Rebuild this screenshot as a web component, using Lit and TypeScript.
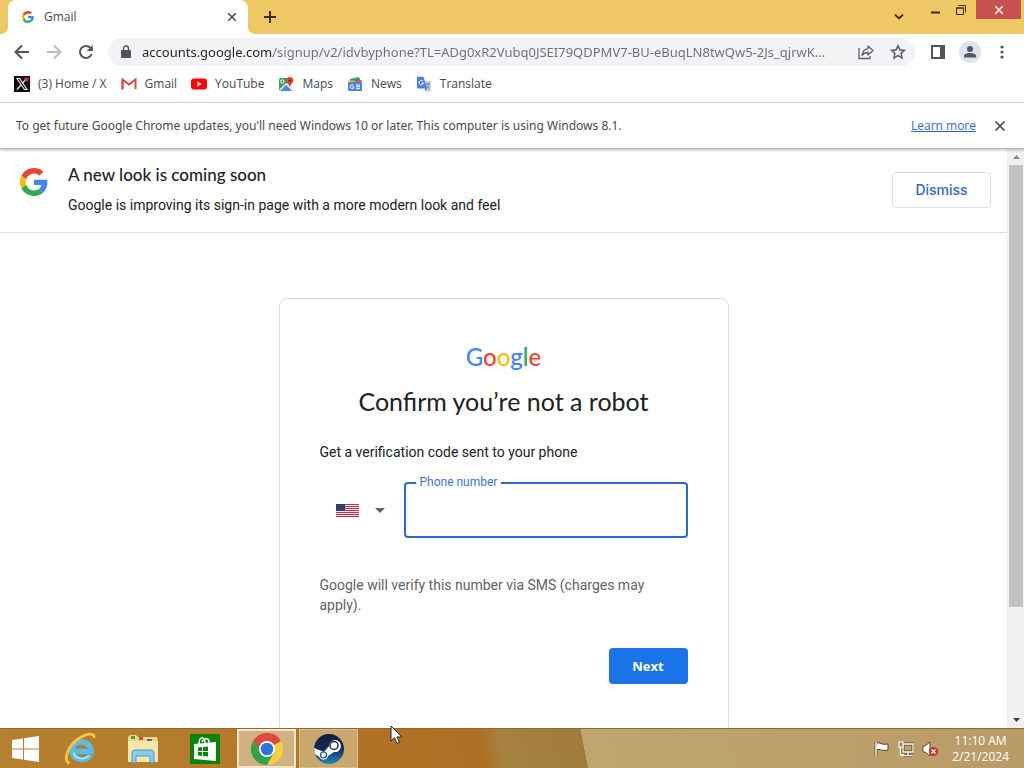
import { LitElement, html, svg, css } from "lit";
import { customElement } from "lit/decorators.js";

const googleG = html`<svg viewBox="0 0 48 48" aria-hidden="true">
  <path fill="#EA4335" d="M24 9.5c3.54 0 6.71 1.22 9.21 3.6l6.85-6.85C35.9 2.38 30.47 0 24 0 14.62 0 6.51 5.38 2.56 13.22l7.98 6.19C12.43 13.72 17.74 9.5 24 9.5z"/>
  <path fill="#4285F4" d="M46.98 24.55c0-1.57-.15-3.09-.38-4.55H24v9.02h12.94c-.58 2.96-2.26 5.48-4.78 7.18l7.73 6c4.51-4.18 7.09-10.36 7.09-17.65z"/>
  <path fill="#FBBC05" d="M10.53 28.59c-.48-1.45-.76-2.99-.76-4.59s.27-3.14.76-4.59l-7.98-6.19C.92 16.46 0 20.12 0 24c0 3.88.92 7.54 2.56 10.78l7.97-6.19z"/>
  <path fill="#34A853" d="M24 48c6.48 0 11.93-2.13 15.89-5.81l-7.73-6c-2.15 1.45-4.92 2.3-8.16 2.3-6.26 0-11.57-4.22-13.47-9.91l-7.98 6.19C6.51 42.62 14.62 48 24 48z"/>
</svg>`;

const cross = html`<svg viewBox="0 0 12 12" aria-hidden="true"><path d="M1.5 1.5l9 9M10.5 1.5l-9 9" stroke="currentColor" stroke-width="1.7" fill="none"/></svg>`;

const bookmarks = [
  { name: "(3) Home / X", icon: svg`<rect width="16" height="16" fill="#0b0b0b"/><path d="M3 2.500h2.600l7.400 11h-2.600z" fill="none" stroke="#eee" stroke-width="1.100"/><path d="M12.500 2.500l-4.300 5M7 8.800l-4 4.700" stroke="#eee" stroke-width="1.200"/><circle cx="12.500" cy="3.500" r="2.200" fill="#e0245e"/>` },
  { name: "Gmail", icon: svg`<path d="M1.500 13V3.500L8 8.500l6.500-5V13" fill="none" stroke="#e0463e" stroke-width="2"/><path d="M1.500 13.500V5" stroke="#cf4d63" stroke-width="2"/>` },
  { name: "YouTube", icon: svg`<rect y="2.500" width="16" height="11" rx="3" fill="#f00"/><path d="M6.400 5.500v5l4.300-2.500z" fill="#fff"/>` },
  { name: "Maps", icon: svg`<rect x="1" y="2" width="13" height="13" rx="1.500" fill="#34a05a"/><path d="M8 8l6-3v10H9z" fill="#e8e8e8"/><path d="M2 15l6-6 6 6z" fill="#4a86ee"/><path d="M1.500 14.500l7-7" stroke="#f3efe0" stroke-width="1.500"/><path d="M11.800 1a3.600 3.600 0 0 0-3.600 3.600c0 2.600 3 3.500 3.600 7 .6-3.500 3.600-4.400 3.600-7A3.600 3.600 0 0 0 11.800 1z" fill="#df4639"/><circle cx="11.800" cy="4.600" r="1.200" fill="#7d211b"/><circle cx="4.300" cy="5.500" r="1.700" fill="none" stroke="#fff"/>` },
  { name: "News", icon: svg`<path d="M3 3l9-2 2 5H3z" fill="#2f9e57"/><path d="M1.500 4.500h6V8h-6z" fill="#e8b73a"/><path d="M9 4h5.500v4H9z" fill="#d9534a"/><rect x="1" y="6" width="14" height="9" rx="1" fill="#4d83e8"/><path d="M6.500 9.500A1.900 1.900 0 1 0 7 11H5.300M9 9h4M9 10.800h4M9 12.600h4" stroke="#fff" fill="none"/>` },
  { name: "Translate", icon: svg`<path d="M6.500 5H14a1 1 0 0 1 1 1v8.500a1 1 0 0 1-1 1H9.500z" fill="#c9ced6"/><path d="M9.500 8h4.500M11.700 7v1M13 8c-.4 2-1.600 3.500-3 4.500M10.600 9.500c.5 1.200 1.500 2.200 2.700 3" stroke="#6d83a8" fill="none"/><path d="M1 .800h6.500L11 12.500H2a1 1 0 0 1-1-1z" fill="#4a80e6"/><path d="M9 12.500h2L9.500 15z" fill="#2c56b4"/><path d="M7 5.200A2.200 2.200 0 1 0 7.500 7H5.400" stroke="#fff" fill="none"/>` },
];

@customElement("app-root")
export class AppRoot extends LitElement {
  static styles = css`
    :host { display: flex; flex-direction: column; height: 100vh; overflow: hidden; background: #fff; color: #202124; font: 14px/20px Roboto, sans-serif; }
    * { box-sizing: border-box; }
    button, input, select { font: inherit; color: inherit; margin: 0; border: 0; background: none; padding: 0; }
    button { display: flex; align-items: center; justify-content: center; flex: none; }
    svg { display: block; flex: none; }
    h1, h2, p { margin: 0; font-weight: 400; }
    .ui { font-family: "Open Sans", sans-serif; font-size: 12px; line-height: 16px; }

    .strip { display: flex; flex: none; height: 34px; padding-left: 8px; background: #efc865; color: #3d2b12; }
    .tab { position: relative; display: flex; align-items: center; width: 240px; padding: 0 10px 0 14px; background: #fff; border-radius: 8px 8px 0 0; color: #45494d; }
    .tab::before, .tab::after { content: ""; position: absolute; bottom: 0; width: 8px; height: 8px; }
    .tab::before { left: -8px; background: radial-gradient(circle at 0 0, transparent 8px, #fff 8px); }
    .tab::after { right: -8px; background: radial-gradient(circle at 100% 0, transparent 8px, #fff 8px); }
    .tab-icon svg { width: 12px; height: 12px; }
    .tab-title { flex: 1; padding-left: 10px; }
    .tab button, .tab button svg { width: 12px; height: 10px; }
    .plus { width: 28px; margin-left: 8px; }
    .space { flex: 1; }
    .search-tabs { width: 30px; margin-right: 8px; }
    .win { width: 26px; height: 20px; }
    .win-close { width: 45px; height: 19px; margin: 0 3px 0 2px; background: #c75050; color: #fff; }
    .win-close svg { width: 10px; height: 10px; }

    .toolbar { display: flex; align-items: center; flex: none; height: 36px; padding: 0 12px; color: #5f6368; }
    .nav { display: flex; gap: 12px; padding-right: 12px; }
    .nav button { width: 20px; height: 20px; }
    .omnibox { display: flex; align-items: center; flex: 1; min-width: 0; height: 28px; padding: 0 8px 0 12px; border-radius: 14px; background: #f1f3f4; }
    .url { flex: 1; min-width: 0; height: 24px; margin: 0 12px 0 10px; font-family: "Noto Sans", sans-serif; font-size: 13px; color: transparent; background: linear-gradient(90deg, #202124 131px, #6b6f74 131px); -webkit-background-clip: text; background-clip: text; text-overflow: ellipsis; outline: 0; }
    .box-actions { display: flex; gap: 14px; }
    .box-actions button { width: 18px; height: 18px; }
    .tools { display: flex; align-items: center; gap: 12px; padding-left: 13px; }
    .tools button { width: 20px; height: 22px; }

    .bookmarks { display: flex; align-items: center; gap: 14px; flex: none; height: 33px; padding: 0 14px 4px; border-bottom: 1px solid #d4d5d8; }
    .bookmarks a { display: flex; align-items: center; gap: 8px; color: #45494d; text-decoration: none; }

    .infobar { display: flex; align-items: center; flex: none; height: 46px; padding: 0 18px 0 16px; border-bottom: 1px solid #b4b4b4; box-shadow: 0 1px 3px #0004; color: #45494d; z-index: 1; }
    .infobar p { flex: 1; font-family: "Noto Sans", sans-serif; }
    .infobar a { color: #3267c8; margin-right: 18px; }
    .infobar button, .infobar button svg { width: 12px; height: 12px; }

    .view { display: flex; flex: 1; min-height: 0; }
    .page { flex: 1; min-width: 0; overflow: hidden; }
    .banner { display: flex; padding: 16px 16px 16px 20px; border-bottom: 1px solid #dadce0; }
    .banner-logo svg { width: 28px; height: 28px; margin-top: 3px; }
    .banner-text { flex: 1; padding-left: 20px; }
    .banner h2 { font: 500 17px/20px Lato, sans-serif; }
    .banner p { padding: 10px 0 1px; }
    .dismiss { width: 99px; height: 36px; margin-top: 7px; border: 1px solid #dadce0; border-radius: 4px; color: #3468c9; font: 500 14px/20px Inter, sans-serif; }

    .card { width: 450px; max-width: 100%; min-height: 500px; margin: 65px auto 0; padding: 42px 40px 36px; border: 1px solid #dadce0; border-radius: 8px; }
    .wordmark { height: 32px; text-align: center; font: 500 24px/32px Lato, sans-serif; }
    .b { color: #4285f4; } .r { color: #ea4335; } .y { color: #fbbc05; } .g { color: #34a853; }
    .card h1 { padding-top: 12px; text-align: center; font: 400 25px/32px Lato, sans-serif; }
    .lead { padding-top: 25px; }
    .phone { display: flex; padding-top: 20px; }
    .country { display: grid; align-items: center; width: 84px; height: 56px; }
    .country > * { grid-area: 1 / 1; }
    .country-face { display: flex; align-items: center; gap: 16px; padding-left: 16px; }
    .country select { width: 100%; height: 100%; appearance: none; color: transparent; }
    .country option { color: #202124; }
    .field { position: relative; flex: 1; }
    .field input { width: 100%; height: 56px; padding: 0 14px; border: 2px solid #2a6ac8; border-radius: 4px; outline: 0; font-size: 16px; }
    .field label { position: absolute; left: 12px; top: -8px; padding: 0 4px; background: #fff; color: #3f73cd; font-size: 12px; line-height: 16px; }
    .note { padding-top: 37px; color: #5f6368; }
    .actions { display: flex; justify-content: flex-end; padding-top: 33px; }
    .next { width: 79px; height: 36px; border-radius: 4px; background: #1a73e8; color: #fff; font: 700 13px/20px "Open Sans", sans-serif; }

    .scroll { display: flex; flex-direction: column; flex: none; width: 17px; padding: 0 1px 0 2px; background: #f1f1f1; }
    .scroll button { height: 16px; }
    .thumb { flex: 442; background: #c1c1c1; }
    .track { flex: 105; }

    .taskbar { display: flex; flex: none; height: 40px; border-top: 1px solid #8d6a35; background: linear-gradient(79deg, #b5802f 0, #b37a2b 24%, #b27327 34%, #ae6e23 47%, #a6823f 49%, #a07c3c 57%, #bfa670 57%, #b99b68 100%); color: #fff; }
    .apps { display: flex; flex: 1; }
    .apps button { width: 62px; }
    .apps button:first-child { width: 50px; }
    .apps .open { width: 59px; margin-left: 1px; margin-right: 2px; border: 1px solid #d9bd8b; background: #c9a76d; }
    .apps .active { border: 2px solid #f5e5c8; background: #d0b282; }
    .tray { display: flex; align-items: center; gap: 8px; padding-right: 14px; }
    .clock { padding: 4px 15px 0 0; text-align: center; }
    .cursor { position: absolute; left: 390px; top: 725px; z-index: 2; pointer-events: none; }
  `;

  render() {
    return html`
      <header class="strip ui">
        <div class="tab">
          <span class="tab-icon">${googleG}</span><span class="tab-title">Gmail</span>
          <button aria-label="Close tab">${cross}</button>
        </div>
        <button class="plus" aria-label="New tab"><svg width="12" height="12" viewBox="0 0 12 12"><path d="M6 0v12M0 6h12" stroke="currentColor" stroke-width="2"/></svg></button>
        <span class="space"></span>
        <button class="search-tabs" aria-label="Search tabs"><svg width="10" height="6" viewBox="0 0 10 6"><path d="M1 0.500l4 4 4-4" fill="none" stroke="currentColor" stroke-width="1.800"/></svg></button>
        <button class="win" aria-label="Minimize"><svg width="9" height="10" viewBox="0 0 9 10"><path d="M0 7.500h9" stroke="currentColor" stroke-width="2"/></svg></button>
        <button class="win" aria-label="Restore"><svg width="10" height="10" viewBox="0 0 10 10"><path d="M.500 3v6.500h7V3z M0 3h8M2.500 .500h7v7" fill="none" stroke="currentColor"/></svg></button>
        <button class="win-close" aria-label="Close">${cross}</button>
      </header>

      <nav class="toolbar">
        <div class="nav">
          <button aria-label="Back"><svg width="16" height="16" viewBox="0 0 16 16"><path d="M15 8H2M8 1.500L1.500 8 8 14.500" fill="none" stroke="#505458" stroke-width="2"/></svg></button>
          <button aria-label="Forward"><svg width="16" height="16" viewBox="0 0 16 16"><path d="M1 8h13M8 1.500L14.500 8 8 14.500" fill="none" stroke="#b9bbbe" stroke-width="2"/></svg></button>
          <button aria-label="Reload"><svg width="16" height="16" viewBox="0 0 16 16"><path d="M13.600 10A6 6 0 1 1 12.500 4L14 5.500" fill="none" stroke="#505458" stroke-width="2"/><path d="M14.800 1v6H8.800z" fill="#505458"/></svg></button>
        </div>
        <div class="omnibox">
          <svg width="12" height="14" viewBox="0 0 12 14"><rect x="1" y="5" width="10" height="8" rx="1" fill="#505458"/><path d="M3.500 5.500V3.500a2.500 2.500 0 0 1 5 0v2" fill="none" stroke="#505458" stroke-width="1.400"/></svg>
          <input class="url" aria-label="Address and search bar" .value=${"accounts.google.com/signup/v2/idvbyphone?TL=ADg0xR2Vubq0JSEI79QDPMV7-BU-eBuqLN8twQw5-2Js_qjrwK..."}>
          <div class="box-actions">
            <button aria-label="Share"><svg width="16" height="16" viewBox="0 0 16 16"><path d="M1 4v10.500h11V12" fill="none" stroke="currentColor" stroke-width="1.300"/><path d="M10 2l5 4.500-5 4.500V8.500C7 8.500 5.300 9.500 4 11.500 4.500 7.500 6.500 5 10 4.700z" fill="none" stroke="currentColor" stroke-width="1.300" stroke-linejoin="round"/></svg></button>
            <button aria-label="Bookmark this tab"><svg width="16" height="16" viewBox="0 0 16 16"><path d="M8 1.800l1.900 4.100 4.500.5-3.300 3 .9 4.500L8 11.600l-4 2.300.9-4.500-3.300-3 4.500-.5z" fill="none" stroke="currentColor" stroke-width="1.600"/></svg></button>
          </div>
        </div>
        <div class="tools">
          <button aria-label="Side panel"><svg width="14" height="14" viewBox="0 0 14 14"><path d="M1 1h12v12H1z" fill="none" stroke="#505458" stroke-width="2"/><path d="M9 1h4v12H9z" fill="#505458"/></svg></button>
          <button aria-label="Profile"><svg width="22" height="22" viewBox="0 0 22 22"><circle cx="11" cy="11" r="11" fill="#dfe2e8"/><circle cx="11" cy="8" r="3" fill="#4d5566"/><path d="M5 16.500v-1.500c0-2.200 4-3 6-3s6 .8 6 3v1.500z" fill="#4d5566"/></svg></button>
          <button aria-label="Menu"><svg width="4" height="14" viewBox="0 0 4 14"><g fill="#505458"><circle cx="2" cy="2" r="1.600"/><circle cx="2" cy="7" r="1.600"/><circle cx="2" cy="12" r="1.600"/></g></svg></button>
        </div>
      </nav>

      <nav class="bookmarks ui">
        ${bookmarks.map(b => html`<a href="#"><svg width="16" height="16" viewBox="0 0 16 16">${b.icon}</svg>${b.name}</a>`)}
      </nav>

      <div class="infobar ui">
        <p>To get future Google Chrome updates, you'll need Windows 10 or later. This computer is using Windows 8.1.</p>
        <a href="#">Learn more</a>
        <button aria-label="Close message">${cross}</button>
      </div>

      <div class="view">
        <main class="page">
          <section class="banner">
            <span class="banner-logo">${googleG}</span>
            <div class="banner-text"><h2>A new look is coming soon</h2><p>Google is improving its sign-in page with a more modern look and feel</p></div>
            <button class="dismiss">Dismiss</button>
          </section>
          <section class="card">
            <div class="wordmark"><span class="b">G</span><span class="r">o</span><span class="y">o</span><span class="b">g</span><span class="g">l</span><span class="r">e</span></div>
            <h1>Confirm you’re not a robot</h1>
            <p class="lead">Get a verification code sent to your phone</p>
            <div class="phone">
              <div class="country">
                <span class="country-face">
                  <svg width="23" height="13" viewBox="0 0 23 13"><rect width="23" height="13" fill="#f6e3e6"/><path d="M0 .500h23M0 2.500h23M0 4.500h23M0 6.500h23M0 8.500h23M0 10.500h23M0 12.500h23" stroke="#c4314b"/><rect width="9" height="7" fill="#2f3f70"/></svg>
                  <svg width="10" height="5" viewBox="0 0 10 5"><path d="M0 0h10L5 5z" fill="#5f6368"/></svg>
                </span>
                <select aria-label="Country"><option>United States</option></select>
              </div>
              <div class="field"><input id="phone" type="tel"><label for="phone">Phone number</label></div>
            </div>
            <p class="note">Google will verify this number via SMS (charges may apply).</p>
            <div class="actions"><button class="next">Next</button></div>
          </section>
        </main>
        <div class="scroll">
          <button aria-label="Scroll up"><svg width="7" height="4" viewBox="0 0 7 4"><path d="M0 4l3.500-4L7 4z" fill="#8a8a8a"/></svg></button>
          <div class="thumb"></div><div class="track"></div>
          <button aria-label="Scroll down"><svg width="7" height="4" viewBox="0 0 7 4"><path d="M0 0h7L3.500 4z" fill="#404040"/></svg></button>
        </div>
      </div>

      <footer class="taskbar ui">
        <div class="apps">
          <button aria-label="Start"><svg width="27" height="26" viewBox="0 0 27 26"><path d="M0 4l11-1.500v10H0zM12 2.300L27 0v12.500H12zM0 13.500h11v10L0 22zM12 13.500h15V26l-15-2.300z" fill="#fff"/></svg></button>
          <button aria-label="Internet Explorer"><svg width="32" height="32" viewBox="0 0 32 32"><path d="M25.500 22C22 29 7 28 7 17.500 7 6 26 6 26 18.500H10" fill="none" stroke="#58bde8" stroke-width="5.500"/><path d="M24 22.500c-4 5-14 4-15.500-3" fill="none" stroke="#b9e7f8" stroke-width="1.500"/><path d="M4.500 30.500C-2.500 27 3 13 13 6S30 0 29 5" fill="none" stroke="#f5c83c" stroke-width="2.800"/></svg></button>
          <button aria-label="File Explorer"><svg width="32" height="30" viewBox="0 0 32 30"><path d="M1 3l2-2h6l2 2h19l1 3v22H1z" fill="#edd583"/><path d="M4 2h4v3H4z" fill="#47a447"/><path d="M12 3h4v3h-4z" fill="#d34b3d"/><path d="M20 5h5v2h-5z" fill="#3c74b5"/><path d="M1 7h30v21H1z" fill="#f6e7a9"/><path d="M5 29V19c0-2 1-3 3-3h16c2 0 3 1 3 3v10h-4v-7H9v7z" fill="#8bcaeb" stroke="#4b9acb"/></svg></button>
          <button aria-label="Store"><svg width="30" height="30" viewBox="0 0 30 30"><rect width="30" height="30" fill="#0b820b"/><path d="M4 10l22-2v19L4 25z" fill="#fff"/><path d="M9 10c0-8 6-8 6-1M12 8c2-5 8-4 7 1" fill="none" stroke="#fff" stroke-width="1.500"/><path d="M8 13.500l4-.5v4H8zM13 13l5-.5V17h-5zM8 18h4v4l-4-.5zM13 18h5v4.500l-5-.5z" fill="#0b820b"/></svg></button>
          <button class="open active" aria-label="Google Chrome"><svg width="32" height="32" viewBox="0 0 32 32"><circle cx="16" cy="16" r="16" fill="#f9cf3e"/><path d="M16 16L2.100 8A16 16 0 0 1 29.900 8z" fill="#dd4b3e"/><path d="M2.100 8A16 16 0 0 0 16 32l7-12H9z" fill="#35a04e"/><path d="M9 20L2.100 8 16 8v8z" fill="#dd4b3e"/><path d="M2.100 8l7 12 4-2z" fill="#35a04e"/><circle cx="16" cy="16" r="8" fill="#fff"/><circle cx="16" cy="16" r="6.300" fill="#2f73dc"/></svg></button>
          <button class="open" aria-label="Steam"><svg width="30" height="30" viewBox="0 0 30 30"><defs><linearGradient id="steam" x2="0" y2="1"><stop stop-color="#151a3a"/><stop offset="0.500" stop-color="#17295a"/><stop offset="1" stop-color="#1c8cc0"/></linearGradient></defs><circle cx="15" cy="15" r="15" fill="url(#steam)"/><path d="M0 14l10 4 5-6a6 6 0 1 1 5 6l-6 4a4.500 4.500 0 0 1-8.500 1L.800 20z" fill="#fff"/><circle cx="20" cy="11.500" r="4" fill="#fff" stroke="#1a2a55" stroke-width="1.500"/><circle cx="9.500" cy="21" r="3" fill="none" stroke="#1b4a80" stroke-width="1.200"/></svg></button>
        </div>
        <div class="tray">
          <svg width="16" height="16" viewBox="0 0 16 16"><path d="M2 1v14" stroke="#5b4524" stroke-width="3"/><path d="M2 2.500c4-2 5 2 12 .5v6C8 11 7 7 2 9z" fill="#fff" stroke="#5b4524"/><path d="M2 1v14" stroke="#fff" stroke-width="1.400"/></svg>
          <svg width="16" height="16" viewBox="0 0 16 16"><path d="M5 3h10v8H5zM10 11v3M6 14.500h8" fill="none" stroke="#5b4524" stroke-width="3"/><path d="M5 3h10v8H5zM10 11v3M6 14.500h8M2.500 6v8H6" fill="none" stroke="#fff" stroke-width="1.300"/><rect x="1" y="1" width="4" height="5" fill="#a58a59" stroke="#fff"/></svg>
          <svg width="16" height="16" viewBox="0 0 16 16"><path d="M1 5h2l5-4v14l-5-4H1z" fill="#fff" stroke="#5b4524"/><circle cx="11.500" cy="10.500" r="4.500" fill="#c9302c"/><path d="M9.500 8.500l4 4M13.500 8.500l-4 4" stroke="#fff" stroke-width="1.400"/></svg>
        </div>
        <div class="clock">11:10 AM<br>2/21/2024</div>
      </footer>
      <svg class="cursor" width="13" height="20" viewBox="0 0 13 20"><path d="M1 1v15l3.500-3.300L7 18.500l2.500-1L7 12h4.800z" fill="#fff" stroke="#222"/></svg>
    `;
  }
}
